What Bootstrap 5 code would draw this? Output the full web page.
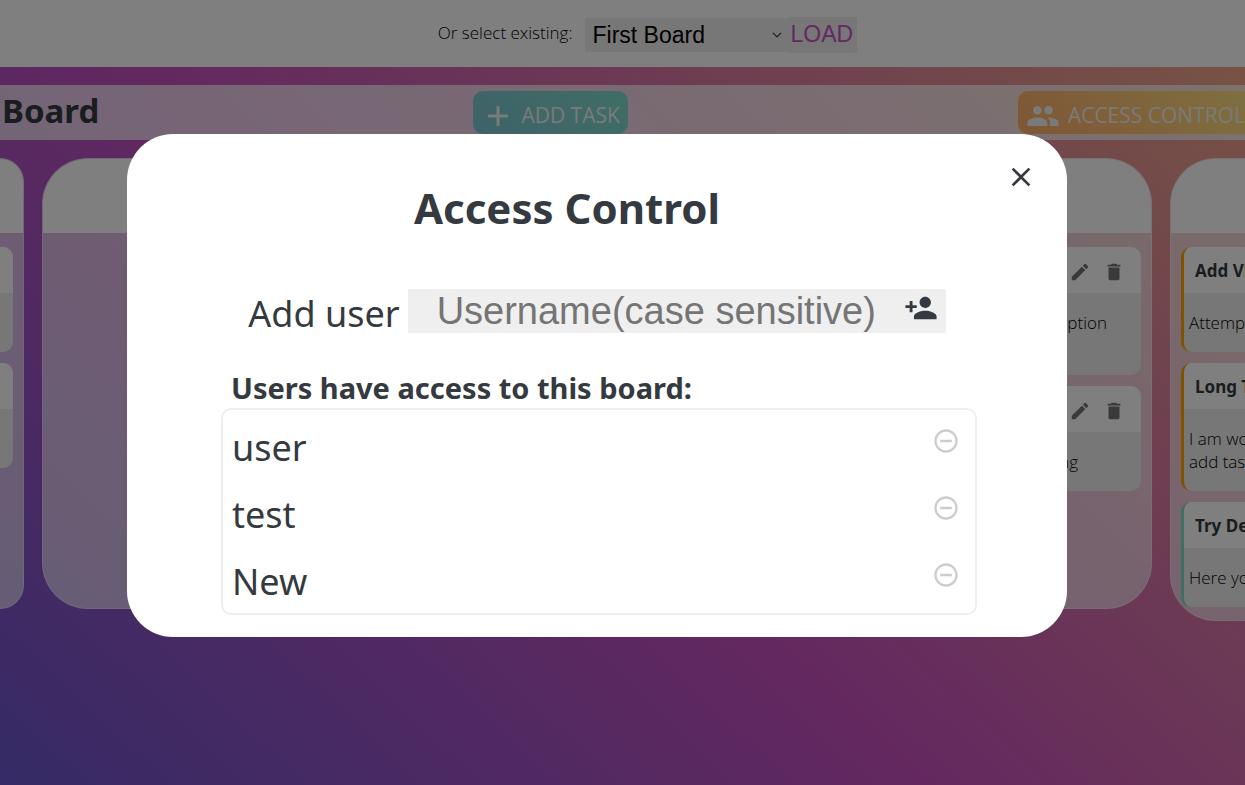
<!DOCTYPE html>
<html lang="en">
<head>
<meta charset="utf-8">
<meta name="viewport" content="width=device-width, initial-scale=1">
<title>Task Board</title>
<link href="https://cdn.jsdelivr.net/npm/bootstrap@5.3.0/dist/css/bootstrap.min.css" rel="stylesheet">
<style>
  body {
    font-family: "Noto Sans", "Open Sans", sans-serif;
    color: #343a40;
    min-height: 100vh;
    overflow: hidden;
    background: linear-gradient(43deg, #6a56cc 0%, #c850c0 44%, #f1ac85 100%) no-repeat;
  }
  svg { fill: currentColor; display: block; }
  .picker { height: 67px; padding: 2px 0 0 50px; }
  .picker label { font-family: "Open Sans", sans-serif; font-weight: 300; font-size: 17px; line-height: 24px; color: #000; margin-bottom: 4px; }
  .picker select, .picker button { font: 23px "Liberation Sans", sans-serif; background-color: #efefef; border: 0; border-radius: 2px; }
  .picker select { width: 202px; height: 34px; padding: 0 8px; background-size: 10px; background-position: right 5px center; color: #000; }
  .picker button { height: 36px; padding: 0 4px; color: #c850c0; }
  .board-bar { height: 55px; margin-top: 18px; background: rgba(255,255,255,.7); }
  .board-bar h1 { font-size: 33px; line-height: 50px; padding: 0 0 4px 2px; }
  .action { height: 43px; border: 0; border-radius: 10px; color: #f4f4f4; font-size: 21px; font-family: "Open Sans", sans-serif; white-space: nowrap; padding: 6px 8px 0 8px; }
  .add-task { background: linear-gradient(45deg, #7cc4d2, #80dccb); gap: 6px; margin-right: 16px; }
  .access { background: linear-gradient(45deg, #ffac6c, #ffe080); padding-right: 0; border-radius: 10px 0 0 10px; }
  .lanes { gap: 18px; margin-top: 18px; }
  .lane { width: 358px; min-height: 451px; border-radius: 46px; border: 1px solid rgba(255,255,255,.35); background: rgba(255,255,255,.6); overflow: hidden; padding-bottom: 13px; }
  .lane-head { height: 74px; background: #fff; margin-bottom: 14px; }
  .lane-cut { width: 24px; border-radius: 0 46px 46px 0; }
  .task { margin: 0 10px 11px; border-radius: 10px; background: #eee; overflow: hidden; min-height: 105px; }
  .lane-cut .task { margin-left: 0; border-radius: 0 10px 10px 0; }
  .task-head { height: 46px; background: #fff; font-weight: 700; font-size: 17px; padding: 2px 12px 0 11px; white-space: nowrap; }
  .task p { font-family: "Open Sans", sans-serif; font-weight: 300; font-size: 17px; line-height: 23px; padding: 18px 5px; margin: 0; color: #000; white-space: nowrap; }
  .task p.to-gap { padding-right: 34px; }
  .task p.to-icon { padding-right: 63px; }
  .task .icon-btn { color: #757575; }
  .task-orange { border-left: 3px solid #ffa500; }
  .task-green { border-left: 3px solid #80dcc0; }
  .scrim { background: rgba(0,0,0,.5); }
  .dialog { width: 75.5%; margin: 134px 0 0 10.2%; background: #fff; border-radius: 46px; padding: 22px; }
  .dialog h2 { font-size: 42px; font-weight: 700; line-height: 60px; padding-top: 22px; }
  .icon-btn { border: 0; background: none; padding: 0; color: inherit; }
  .add-row { margin-top: 51px; height: 48px; font-size: 36px; }
  .add-row label { line-height: 50px; }
  .add-row .field { width: 538px; height: 44px; background: #efefef; border-radius: 2px; }
  .add-row input { font: 38px "Liberation Sans", sans-serif; border: 0; background: none; min-width: 0; padding: 0 0 0 29px; height: 44px; outline: 0; }
  .add-row input::placeholder { color: #757575; opacity: 1; }
  .members { width: 760px; padding-left: 4px; }
  .members h3 { font-size: 29px; font-weight: 700; line-height: 40px; margin: 31px 0 0 10px; }
  .members ul { border: 2px solid #eee; border-radius: 10px; padding: 1px 15px 1px 9px; margin: 0; }
  .members li { height: 67px; font-size: 36px; line-height: 74px; }
  .members li button { color: #ccc; margin-top: 16px; }
</style>
</head>
<body>
<header class="picker bg-white d-flex justify-content-center align-items-center">
  <form class="d-flex align-items-center">
    <label for="board" class="me-2 pe-1">Or select existing:</label>
    <select id="board" class="form-select"><option>First Board</option></select>
    <button type="button">LOAD</button>
  </form>
</header>

<section class="board-bar d-flex align-items-center justify-content-between">
  <h1 class="fw-bold m-0">Board</h1>
  <button class="action add-task d-flex align-items-center" type="button">
    <svg width="34" height="34" viewBox="0 0 24 24"><path d="M19 13h-6v6h-2v-6H5v-2h6V5h2v6h6v2z"/></svg>
    <span>ADD TASK</span>
  </button>
  <button class="action access d-flex align-items-center gap-2" type="button">
    <svg width="34" height="34" viewBox="0 0 24 24"><path d="M16 11c1.66 0 2.99-1.34 2.99-3S17.66 5 16 5s-3 1.34-3 3 1.34 3 3 3zm-8 0c1.66 0 2.99-1.34 2.99-3S9.660 5 8 5 5 6.340 5 8s1.340 3 3 3zm0 2c-2.330 0-7 1.170-7 3.500V19h14v-2.500c0-2.330-4.670-3.500-7-3.500zm8 0c-.290 0-.620.020-.970.050 1.160.840 1.970 1.970 1.970 3.450V19h6v-2.500c0-2.330-4.670-3.500-7-3.500z"/></svg>
    <span>ACCESS CONTROL</span>
  </button>
</section>

<main class="lanes d-flex align-items-start">
  <section class="lane lane-cut flex-shrink-0 border-start-0">
    <div class="lane-head"></div>
    <article class="task"><div class="task-head"></div></article>
    <article class="task"><div class="task-head"></div></article>
  </section>
  <section class="lane flex-shrink-0"><div class="lane-head"></div></section>
  <section class="lane flex-shrink-0"><div class="lane-head"></div></section>
  <section class="lane flex-shrink-0">
    <div class="lane-head"></div>
    <article class="task">
      <div class="task-head d-flex align-items-center justify-content-end gap-2 pt-1">
        <button class="icon-btn me-1" type="button" aria-label="Edit"><svg width="22" height="22" viewBox="0 0 24 24"><path d="M3 17.250V21h3.750L17.810 9.940l-3.750-3.750L3 17.250zM20.710 7.040c.390-.390.390-1.020 0-1.410l-2.340-2.340c-.390-.390-1.020-.390-1.410 0l-1.830 1.830 3.750 3.750 1.830-1.830z"/></svg></button>
        <button class="icon-btn me-1" type="button" aria-label="Delete"><svg width="22" height="22" viewBox="0 0 24 24"><path d="M6 19c0 1.100.900 2 2 2h8c1.100 0 2-.900 2-2V7H6v12zM19 4h-3.500l-1-1h-5l-1 1H5v2h14V4z"/></svg></button>
      </div>
      <p class="text-end to-gap">description<br>&nbsp;</p>
    </article>
    <article class="task">
      <div class="task-head d-flex align-items-center justify-content-end gap-2 pt-1">
        <button class="icon-btn me-1" type="button" aria-label="Edit"><svg width="22" height="22" viewBox="0 0 24 24"><path d="M3 17.250V21h3.750L17.810 9.940l-3.750-3.750L3 17.250zM20.710 7.040c.390-.390.390-1.020 0-1.410l-2.340-2.340c-.390-.390-1.020-.390-1.410 0l-1.830 1.830 3.750 3.750 1.830-1.830z"/></svg></button>
        <button class="icon-btn me-1" type="button" aria-label="Delete"><svg width="22" height="22" viewBox="0 0 24 24"><path d="M6 19c0 1.100.900 2 2 2h8c1.100 0 2-.900 2-2V7H6v12zM19 4h-3.500l-1-1h-5l-1 1H5v2h14V4z"/></svg></button>
      </div>
      <p class="text-end to-icon">testing</p>
    </article>
  </section>
  <section class="lane flex-shrink-0">
    <div class="lane-head"></div>
    <article class="task task-orange"><div class="task-head d-flex align-items-center">Add View</div><p>Attempt</p></article>
    <article class="task task-orange"><div class="task-head d-flex align-items-center">Long Task</div><p>I am working<br>add tasks</p></article>
    <article class="task task-green mb-0"><div class="task-head d-flex align-items-center">Try Demo</div><p>Here you</p></article>
  </section>
</main>

<div class="scrim position-fixed top-0 start-0 w-100 h-100">
  <div class="dialog" role="dialog" aria-labelledby="dlg-title">
    <div class="d-flex align-items-start pe-1">
      <h2 id="dlg-title" class="flex-grow-1 text-center m-0 ps-1">Access Control</h2>
      <button class="icon-btn ms-4 mt-1 me-1" type="button" aria-label="Close"><svg width="32" height="34" viewBox="0 0 24 24"><path d="M19 6.410L17.590 5 12 10.590 6.410 5 5 6.410 10.590 12 5 17.590 6.410 19 12 13.410 17.590 19 19 17.590 13.410 12z"/></svg></button>
    </div>
    <form class="add-row d-flex justify-content-center">
      <label for="username" class="me-2">Add user</label>
      <div class="field d-flex align-items-start">
        <input id="username" class="flex-grow-1" type="text" placeholder="Username(case sensitive)">
        <button class="icon-btn me-2" type="button" aria-label="Add user"><svg width="34" height="38" viewBox="0 0 24 24"><path d="M15 12c2.210 0 4-1.790 4-4s-1.790-4-4-4-4 1.790-4 4 1.790 4 4 4zm-9-2V7H4v3H1v2h3v3h2v-3h3v-2H6zm9 4c-2.670 0-8 1.340-8 4v2h16v-2c0-2.660-5.330-4-8-4z"/></svg></button>
      </div>
    </form>
    <section class="members mx-auto">
      <h3>Users have access to this board:</h3>
      <ul class="list-unstyled">
        <li class="d-flex justify-content-between align-items-start"><span>user</span><button class="icon-btn" type="button" aria-label="Remove user"><svg width="28" height="28" viewBox="0 0 24 24"><path d="M7 11v2h10v-2H7zm5-9C6.480 2 2 6.480 2 12s4.480 10 10 10 10-4.480 10-10S17.520 2 12 2zm0 18c-4.410 0-8-3.590-8-8s3.590-8 8-8 8 3.590 8 8-3.590 8-8 8z"/></svg></button></li>
        <li class="d-flex justify-content-between align-items-start"><span>test</span><button class="icon-btn" type="button" aria-label="Remove test"><svg width="28" height="28" viewBox="0 0 24 24"><path d="M7 11v2h10v-2H7zm5-9C6.480 2 2 6.480 2 12s4.480 10 10 10 10-4.480 10-10S17.520 2 12 2zm0 18c-4.410 0-8-3.590-8-8s3.590-8 8-8 8 3.590 8 8-3.590 8-8 8z"/></svg></button></li>
        <li class="d-flex justify-content-between align-items-start"><span>New</span><button class="icon-btn" type="button" aria-label="Remove New"><svg width="28" height="28" viewBox="0 0 24 24"><path d="M7 11v2h10v-2H7zm5-9C6.480 2 2 6.480 2 12s4.480 10 10 10 10-4.480 10-10S17.520 2 12 2zm0 18c-4.410 0-8-3.590-8-8s3.590-8 8-8 8 3.590 8 8-3.590 8-8 8z"/></svg></button></li>
      </ul>
    </section>
  </div>
</div>
<script src="https://cdn.jsdelivr.net/npm/bootstrap@5.3.0/dist/js/bootstrap.bundle.min.js"></script>
</body>
</html>
